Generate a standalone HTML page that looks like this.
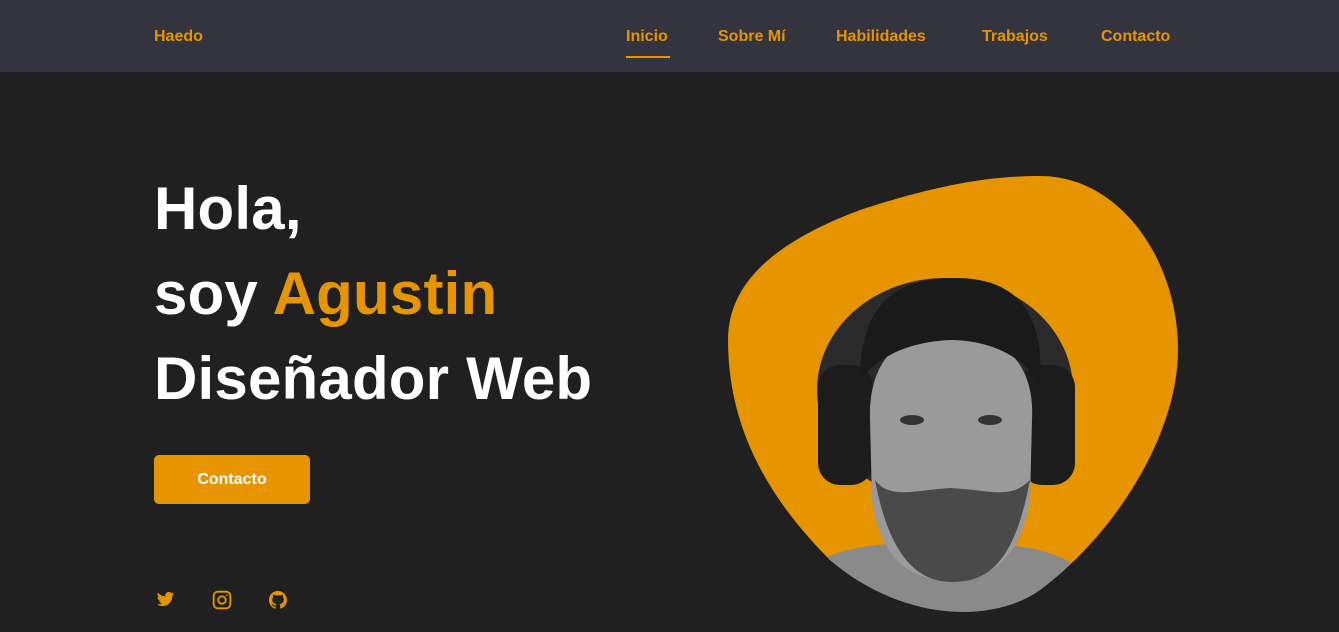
<!DOCTYPE html>
<html><head><meta charset="utf-8"><style>
*{margin:0;padding:0;box-sizing:border-box}
body{width:1339px;height:632px;overflow:hidden;background:#202020;font-family:"Liberation Sans",sans-serif}
header{position:absolute;top:0;left:0;width:1339px;height:72px;background:#33343e}
.logo{position:absolute;left:154px;top:28px;color:#e69500;font-weight:bold;font-size:16px}
nav a{position:absolute;top:28px;color:#e69500;font-weight:bold;font-size:16px;text-decoration:none}
.ul{position:absolute;left:626px;top:56px;width:44px;height:2px;background:#e69500}
h1{position:absolute;left:154px;top:166px;color:#fff;font-size:60px;line-height:85px;font-weight:bold;letter-spacing:0.2px}
h1 span{color:#e69500}
.btn{position:absolute;left:154px;top:455px;width:156px;height:49px;background:#e69500;border-radius:5px;color:#fff;font-weight:bold;font-size:16px;text-align:center;line-height:49px}
.ic{position:absolute;top:590px}
</style></head><body>
<header><div class="logo">Haedo</div>
<nav><a style="left:626px">Inicio</a><a style="left:718px">Sobre Mí</a><a style="left:836px">Habilidades</a><a style="left:982px">Trabajos</a><a style="left:1101px">Contacto</a></nav>
<div class="ul"></div></header>
<h1>Hola,<br>soy <span>Agustin</span><br>Diseñador Web</h1>
<div class="btn">Contacto</div>
<svg class="ic" style="left:155px" width="21" height="19" viewBox="0 0 24 24"><path fill="#e69500" d="M23 4.6a9 9 0 0 1-2.6.7 4.6 4.6 0 0 0 2-2.5 9 9 0 0 1-2.9 1.1A4.5 4.5 0 0 0 11.8 8 12.8 12.8 0 0 1 2.5 3.3a4.5 4.5 0 0 0 1.4 6 4.5 4.5 0 0 1-2-.6 4.5 4.5 0 0 0 3.6 4.5 4.5 4.5 0 0 1-2 .1 4.5 4.5 0 0 0 4.2 3.1A9 9 0 0 1 1 18.3 12.8 12.8 0 0 0 7.9 20.3c8.3 0 12.8-6.9 12.8-12.8v-.6A9 9 0 0 0 23 4.6z"/></svg>
<svg class="ic" style="left:212px" width="20" height="20" viewBox="0 0 24 24" fill="none" stroke="#e69500" stroke-width="2.2"><rect x="2" y="2" width="20" height="20" rx="5"/><circle cx="12" cy="12" r="4.5"/><circle cx="17.8" cy="6.2" r="1" fill="#e69500" stroke="none"/></svg>
<svg class="ic" style="left:268px" width="20" height="20" viewBox="0 0 24 24"><path fill="#e69500" d="M12 1a11 11 0 0 0-3.5 21.4c.6.1.8-.2.8-.5v-2c-3 .7-3.7-1.3-3.7-1.3-.5-1.3-1.2-1.6-1.2-1.6-1-.7.1-.7.1-.7 1.1.1 1.7 1.1 1.7 1.1 1 1.7 2.6 1.2 3.2.9.1-.7.4-1.2.7-1.5-2.4-.3-5-1.2-5-5.4 0-1.2.4-2.2 1.1-2.9-.1-.3-.5-1.4.1-2.9 0 0 .9-.3 3 1.1a10.4 10.4 0 0 1 5.5 0c2.1-1.4 3-1.1 3-1.1.6 1.5.2 2.6.1 2.9.7.8 1.1 1.7 1.1 2.9 0 4.2-2.6 5.1-5 5.4.4.3.7 1 .7 2v3c0 .3.2.6.8.5A11 11 0 0 0 12 1z"/></svg>
<svg style="position:absolute;left:700px;top:160px" width="500" height="472" viewBox="700 160 500 472">
<defs><clipPath id="b"><path d="M1040 176C1120 176 1178 260 1178 350C1178 430 1120 530 1040 590C990 625 900 620 830 560C770 500 728 430 728 340C728 280 780 240 860 210C940 184 990 176 1040 176Z"/></clipPath></defs>
<path d="M1040 176C1120 176 1178 260 1178 350C1178 430 1120 530 1040 590C990 625 900 620 830 560C770 500 728 430 728 340C728 280 780 240 860 210C940 184 990 176 1040 176Z" fill="#e69500"/>
<g clip-path="url(#b)">
<path d="M780 632L820 560C850 545 900 540 950 545C1010 540 1060 550 1080 570L1110 632Z" fill="#8a8a8a"/>
<ellipse cx="945" cy="390" rx="128" ry="112" fill="#2a2a2a"/>
<rect x="818" y="365" width="55" height="120" rx="22" fill="#1c1c1c"/>
<rect x="1020" y="365" width="55" height="120" rx="22" fill="#1c1c1c"/>
<path d="M870 420C868 360 900 330 950 332C1005 333 1035 365 1032 420L1030 500C1020 560 990 580 950 580C905 580 880 555 872 500Z" fill="#9a9a9a"/>
<path d="M875 480C890 560 920 582 952 582C990 582 1015 560 1030 480C1010 500 990 490 950 488C915 490 890 500 875 480Z" fill="#4a4a4a"/>
<ellipse cx="912" cy="420" rx="12" ry="5" fill="#333"/>
<ellipse cx="990" cy="420" rx="12" ry="5" fill="#333"/>
<path d="M860 380C860 300 900 278 955 278C1015 278 1045 310 1040 385C1020 350 980 340 950 340C910 342 880 355 860 380Z" fill="#1a1a1a"/>
</g></svg>
</body></html>
